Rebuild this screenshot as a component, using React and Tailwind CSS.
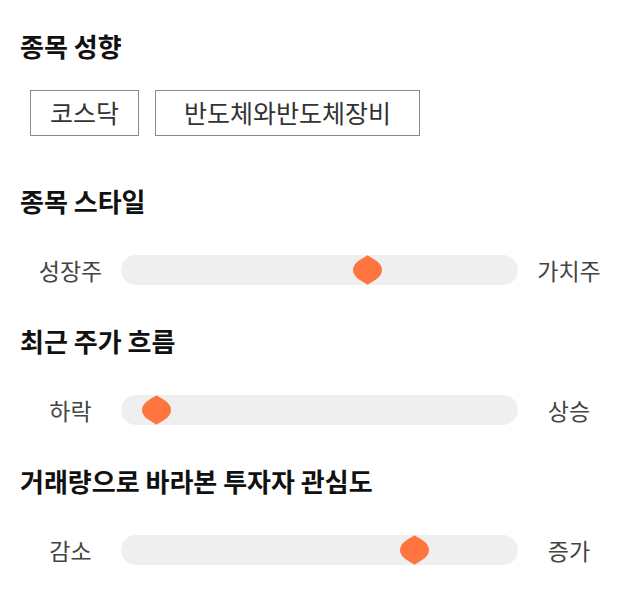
import React from "react";

const font = { fontFamily: '"Noto Sans CJK KR", "Noto Sans", sans-serif' };

function Thumb({ left }) {
  return (
    <svg
      width="29"
      height="30"
      viewBox="0 0 29 30"
      className="absolute top-0"
      style={{ left }}
    >
      <path
        d="M14.5 0.3 C17.5 3 29 6.5 29 15 C29 23.5 17.5 27 14.5 29.7 C11.5 27 0 23.5 0 15 C0 6.5 11.5 3 14.5 0.3 Z"
        fill="#ff7540"
      />
    </svg>
  );
}

function SliderRow({ from, to, left }) {
  return (
    <div className="flex items-center">
      <span className="w-[101px] text-center text-[23px] leading-[30px] text-[#444]">{from}</span>
      <div className="relative h-[30px] flex-1 rounded-full bg-[#efefef]">
        <Thumb left={left} />
      </div>
      <span className="w-[102px] text-center text-[23px] leading-[30px] text-[#444]">{to}</span>
    </div>
  );
}

function Heading({ children, className = "" }) {
  return (
    <h2 className={"text-[26px] font-bold leading-[32px] text-[#111] " + className}>{children}</h2>
  );
}

export default function App() {
  return (
    <div className="w-[640px] h-[606px] bg-white px-5 pt-[30px]" style={font}>
      <Heading>종목 성향</Heading>
      <div className="mt-[28px] ml-[10px] flex gap-4">
        <span className="flex h-[46px] w-[109px] items-center justify-center border border-[#8a8a8a] text-[25px] text-[#333]">
          코스닥
        </span>
        <span className="flex h-[46px] w-[265px] items-center justify-center border border-[#8a8a8a] text-[25px] text-[#333]">
          반도체와반도체장비
        </span>
      </div>

      <Heading className="mt-[49px]">종목 스타일</Heading>
      <div className="mt-[38px]">
        <SliderRow from="성장주" to="가치주" left={232} />
      </div>

      <Heading className="mt-[40px]">최근 주가 흐름</Heading>
      <div className="mt-[38px]">
        <SliderRow from="하락" to="상승" left={21} />
      </div>

      <Heading className="mt-[40px]">거래량으로 바라본 투자자 관심도</Heading>
      <div className="mt-[38px]">
        <SliderRow from="감소" to="증가" left={279} />
      </div>
    </div>
  );
}
